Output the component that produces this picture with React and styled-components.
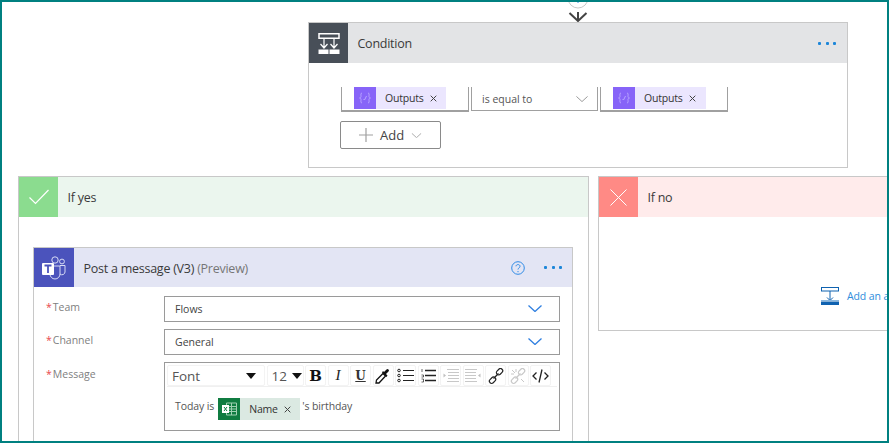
import React from "react";
import styled, { createGlobalStyle } from "styled-components";

const Global = createGlobalStyle`
  html, body { margin: 0; padding: 0; background: #fff; }
  * { box-sizing: border-box; }
`;

const Frame = styled.div`
  width: 889px; height: 443px; border: 2px solid #008080; overflow: hidden; background: #fff;
  font-family: "Open Sans", "Noto Sans", sans-serif; color: #333;
  display: flex; flex-direction: column;
`;
const Connector = styled.div`
  height: 20px; margin-left: 557px; width: 38px; display: flex; justify-content: center; flex: none;
`;
const ConditionCard = styled.section`
  width: 540px; height: 146px; margin-left: 306px; border: 1px solid #c8c8c8; flex: none; background: #fff;
`;
const CardHeader = styled.header`
  height: ${p => p.$h || 40}px; display: flex; align-items: center; background: ${p => p.$bg};
`;
const IconTile = styled.div`
  width: ${p => p.$w || 39}px; height: 100%; flex: none; background: ${p => p.$bg};
  display: flex; align-items: center; justify-content: center;
`;
const HeaderTitle = styled.h2`
  margin: 0 0 0 9.5px; padding-top: 1px; flex: 1; font-size: 12.5px; font-weight: 400; color: #3a3a3a; white-space: nowrap;
  letter-spacing: -0.25px;
`;
const Muted = styled.span`color: #767676;`;
const Dots = styled.div`
  display: flex; gap: 4.5px; margin-right: ${p => p.$mr}px; margin-left: ${p => p.$ml || 0}px;
  i { width: 3px; height: 3px; background: #1c86d9; border-radius: 1px; display: block; }
`;
const ConditionBody = styled.div`
  padding: 24px 0 0 31px;
`;
const Operands = styled.div`display: flex; gap: 2px; height: 25px; margin-left: 1px;`;
const Operand = styled.div`
  width: ${p => p.$w}px; height: 25px; border: solid #a0a0a0; border-width: 0 1px 2px 1px; padding-left: 12px; flex: none;
`;
const OperatorBox = styled.div`
  width: 127px; height: 24px; border: solid #a0a0a0; border-width: 0 1px 1px 1px; padding: 1px 9px 0 10px;
  display: flex; align-items: center; justify-content: space-between; font-size: 10.5px; color: #555; flex: none;
`;
const Token = styled.span`
  display: inline-flex; align-items: center; height: 22px; background: ${p => p.$bg}; font-size: 10.5px; color: #333;
  letter-spacing: -0.2px; width: ${p => p.$w}px; vertical-align: top; margin-left: ${p => p.$ml || 0}px; flex: none;
`;
const TokenIcon = styled.span`
  width: 22px; height: 22px; background: ${p => p.$bg}; flex: none; display: flex; align-items: center; justify-content: center;
`;
const TokenLabel = styled.span`margin-left: ${p => p.$ml}px;`;
const TokenClose = styled.span`margin-left: 6px; display: flex;`;
const AddButton = styled.button`
  width: 101px; height: 28px; margin-top: 9px; border: 1px solid #8a8a8a; border-radius: 2px; background: #fff;
  display: flex; align-items: center; padding: 0 0 0 18px; gap: 7px; font: 400 13px "Open Sans", sans-serif; color: #444;
`;
const Branches = styled.div`
  display: flex; gap: 9px; margin: 8px 0 0 16px; align-items: flex-start; width: 1000px; flex: none;
`;
const YesCard = styled.section`
  width: 571px; height: 300px; border: 1px solid #c8c8c8; flex: none;
`;
const NoCard = styled.section`
  width: 320px; height: 155px; border: 1px solid #c8c8c8; flex: none; display: flex; flex-direction: column;
`;
const YesBody = styled.div`padding: 30px 15px 0 14px;`;
const NoBody = styled.div`
  flex: 1; padding: 70px 0 0 222px;
`;
const AddAction = styled.div`
  display: flex; align-items: center; gap: 8px; font-size: 10.5px; letter-spacing: -0.1px; color: #2f8ddc; white-space: nowrap;
`;
const ActionCard = styled.section`
  width: 540px; height: 300px; border: 1px solid #c8c8c8;
`;
const ActionIconWrap = styled.div`margin-left: auto; display: flex;`;
const ActionBody = styled.div`
  padding: 9px 12px 0 12px; display: flex; flex-direction: column; gap: 7px;
`;
const Row = styled.div`display: grid; grid-template-columns: 118px 396px; align-items: start;`;
const Label = styled.label`
  font-size: 10.5px; color: #808080; display: flex; gap: 1px; padding-top: ${p => p.$pt}px;
  b { color: #e8474c; font-weight: 400; }
`;
const Select = styled.div`
  height: 26px; border: 1px solid #9a9a9a; padding: 0 17px 1px 10px; font-size: 10.5px; color: #444;
  display: flex; align-items: center; justify-content: space-between;
`;
const Editor = styled.div`
  height: 69px; border: 1px solid #9a9a9a; padding: 2px 2px 0 2px;
`;
const Toolbar = styled.div`
  height: 22px; display: flex; gap: 1.5px; border-bottom: 1px solid #f0f0f0; align-items: stretch;
`;
const ToolButton = styled.div`
  width: ${p => p.$w || 21}px; border: 1px solid #f3f3f3; border-radius: 2px; flex: none;
  display: flex; align-items: center; justify-content: ${p => p.$between ? "space-between" : "center"};
  padding: ${p => p.$between ? `0 ${p.$pr}px 0 ${p.$pl}px` : "0"};
  font-size: 13.5px; color: #555;
`;
const Bold = styled.span`font: 700 15px "DejaVu Serif", serif; color: #111;`;
const Ital = styled.span`font: italic 400 15px "Liberation Serif", serif; color: #222;`;
const Under = styled.span`font: 700 12px "DejaVu Serif", serif; color: #333; text-decoration: underline;`;
const Caret = styled.span`
  width: 0; height: 0; border: 5px solid transparent; border-top: 6px solid #111; border-bottom: 0; display: block;
`;
const EditorBody = styled.div`
  display: flex; align-items: flex-start; padding: 11px 0 0 8px; font-size: 10.5px; color: #555; letter-spacing: -0.1px;
`;
const InlineText = styled.span`margin-top: 1px; margin-left: ${p => p.$ml || 0}px;`;

const Chev = ({ w = 14, h = 7, c = "#8a8a8a", sw = 1 }) => (
  <svg width={w} height={h} viewBox="0 0 14 7"><path d="M.5.5 7 6.5 13.5.5" fill="none" stroke={c} strokeWidth={sw} /></svg>
);
const Fx = () => (
  <svg width="14" height="12" viewBox="0 0 14 12" fill="none" stroke="#b9a5ff" strokeWidth="1">
    <path d="M4 1C2.500 1 3 3 3 4.500S1.500 6 1.500 6 3 6 3 7.500 2.500 11 4 11M10 1c1.500 0 1 2 1 3.500S12.500 6 12.500 6 11 6 11 7.500s.5 3.500-1 3.500M5.500 7l1 1 2-4" />
  </svg>
);
const Close = () => (
  <svg width="7" height="7" viewBox="0 0 7 7"><path d="M.7.7l5.600 5.600M6.300.7.7 6.300" stroke="#444" strokeWidth="1" /></svg>
);
const ConditionGlyph = () => (
  <svg width="22" height="21" viewBox="0 0 22 21" fill="none" stroke="#fff">
    <path d="M1 .75h20v4.500H1z" strokeWidth="1.500" />
    <path d="M6 5v10M16 5v10M2.500 11 6 15l3.500-4M12.500 11l3.500 4 3.500-4" strokeWidth="1.200" />
    <path d="M.5 16.500h10v4.500H.5zM11.500 16.500h10v4.500h-10z" fill="#fff" stroke="none" />
  </svg>
);
const Check = () => (
  <svg width="20" height="16" viewBox="0 0 20 16"><path d="M.5 8.500 6.500 14.500 19.500 1" fill="none" stroke="#fff" strokeWidth="1.200" /></svg>
);
const Cross = () => (
  <svg width="17" height="17" viewBox="0 0 17 17"><path d="M.5.5l16 16M16.500.5l-16 16" stroke="#fff" strokeWidth="1" /></svg>
);
const TeamsGlyph = () => (
  <svg width="26" height="26" viewBox="0 0 26 26" fill="none">
    <circle cx="14" cy="5" r="3.200" stroke="#d8dcf5" strokeWidth="1" />
    <circle cx="21" cy="6.500" r="2.400" stroke="#d8dcf5" strokeWidth="1" />
    <path d="M9 11h10v8a5 5 0 0 1-10 0z" stroke="#d8dcf5" strokeWidth="1" />
    <path d="M19 10.500h5v6.500a3 3 0 0 1-5 2" stroke="#d8dcf5" strokeWidth="1" />
    <rect x="1" y="8" width="12" height="12" rx="1" fill="#fff" />
    <path d="M3.500 10.500h7M7 10.500V18" stroke="#4b53bc" strokeWidth="1.800" />
  </svg>
);
const Help = () => (
  <svg width="14" height="14" viewBox="0 0 14 14" fill="none" stroke="#2f8be6">
    <circle cx="7" cy="7" r="6.300" strokeWidth="1" />
    <path d="M5 5.300C5 3 9 3 9 5.300 9 7 7 6.800 7 8.500" strokeWidth="1" />
    <path d="M7 10v1.200" strokeWidth="1" />
  </svg>
);
const ExcelGlyph = () => (
  <svg width="16" height="14" viewBox="0 0 16 14">
    <path d="M5.500 1h10v12h-10z" fill="none" stroke="#9fd0b2" strokeWidth="1" />
    <path d="M5.500 4.500h10M5.500 7h10M5.500 9.500h10M10.500 1v12" stroke="#9fd0b2" strokeWidth="1" />
    <rect x="1" y="3" width="7" height="8" fill="#fff" />
    <path d="M3 5l3 4M6 5 3 9" stroke="#107c41" strokeWidth="1" />
  </svg>
);
const AddActionGlyph = () => (
  <svg width="18" height="18" viewBox="0 0 18 18" fill="none">
    <rect x=".5" y=".5" width="17" height="3.500" stroke="#0f62b0" />
    <path d="M9 4v9M6 10.500l3 3 3-3" stroke="#0f62b0" />
    <rect y="14.500" width="18" height="3.500" fill="#0f62b0" />
    <path d="M0 13.500h18" stroke="#8ab8e0" />
  </svg>
);
const Dropper = () => (
  <svg width="16" height="16" viewBox="0 0 16 16"><path d="M1 15h3l6.500-7L8 5.500 1.500 12z" fill="none" stroke="#111" strokeWidth="1.300" /><path d="M7 4.500l4.500 4.500 1-1.500L11 6l2.500-2.500a1.400 1.400 0 0 0-2-2L9 4 8 3z" fill="#111" /></svg>
);
const ListDots = () => (
  <svg width="17" height="15" viewBox="0 0 17 15" fill="none" stroke="#222"><circle cx="2" cy="2.500" r="1.300" /><circle cx="2" cy="7.500" r="1.300" /><circle cx="2" cy="12.500" r="1.300" /><path d="M6 2.500h11M6 7.500h11M6 12.500h11" strokeWidth="1.200" /></svg>
);
const ListNums = () => (
  <svg width="15" height="15" viewBox="0 0 15 15" fill="none" stroke="#222"><path d="M1 1v3M.5 7h2v2h-2M.5 11h2v3h-2" strokeWidth=".7" /><path d="M4 2.500h11M4 7.500h11M4 12.500h11" strokeWidth="1.300" /></svg>
);
const Indent = ({ flip }) => (
  <svg width="16" height="14" viewBox="0 0 16 14" fill="none" stroke="#c8c8c8" style={flip ? { transform: "scaleX(-1)" } : undefined}><path d="M4 .5h12M5 3.500h11M5 6.500h11M5 9.500h11M4 12.500h12" /><path d="M.5 4.500l2.500 2-2.500 2z" fill="#c0c0c0" stroke="none" /></svg>
);
const LinkIcon = ({ c = "#222", broken }) => (
  <svg width="16" height="16" viewBox="0 0 16 16" fill="none" stroke={c} strokeWidth="1.200">
    <rect x="8" y="1.500" width="7" height="4.500" rx="2.200" transform="rotate(-45 11.500 3.700)" />
    <rect x="1" y="10" width="7" height="4.500" rx="2.200" transform="rotate(-45 4.500 12.200)" />
    <path d="M5.500 10.500l5-5" />
    {broken && <path d="M2 2l3 3M14 14l-3-3M6 1v3M1 6h3" strokeWidth="1" />}
  </svg>
);
const CodeIcon = () => (
  <svg width="17" height="14" viewBox="0 0 17 14" fill="none" stroke="#222" strokeWidth="1.300">
    <path d="M4.500 3.500 1 7l3.500 3.500M12.500 3.500 16 7l-3.500 3.500M10 .5 7 13.500" />
  </svg>
);
const PlusIcon = () => (
  <svg width="14" height="14" viewBox="0 0 14 14"><path d="M7 0v14M0 7h14" stroke="#a0a0a0" strokeWidth="1.200" /></svg>
);

export default function App() {
  return (
    <Frame>
      <Global />
      <Connector>
        <svg width="20" height="20" viewBox="0 0 20 20" fill="none">
          <circle cx="10" cy="-4" r="10" stroke="#c8c8c8" />
          <path d="M10 -2v3" stroke="#2f8be6" strokeWidth="1" />
          <path d="M10 10v9" stroke="#444" strokeWidth="2" />
          <path d="M1.500 11 10 19l8.500-8" stroke="#444" strokeWidth="2" />
        </svg>
      </Connector>
      <ConditionCard>
        <CardHeader $bg="#e3e4e6">
          <IconTile $bg="#484f58"><ConditionGlyph /></IconTile>
          <HeaderTitle>Condition</HeaderTitle>
          <Dots $mr={11}><i /><i /><i /></Dots>
        </CardHeader>
        <ConditionBody>
          <Operands>
            <Operand $w={128}>
              <Token $bg="#ebe6fe" $w={92}><TokenIcon $bg="#8764f8"><Fx /></TokenIcon><TokenLabel $ml={9}>Outputs</TokenLabel><TokenClose><Close /></TokenClose></Token>
            </Operand>
            <OperatorBox>is equal to<Chev w={12} h={6} /></OperatorBox>
            <Operand $w={128}>
              <Token $bg="#ebe6fe" $w={93}><TokenIcon $bg="#8764f8"><Fx /></TokenIcon><TokenLabel $ml={9}>Outputs</TokenLabel><TokenClose><Close /></TokenClose></Token>
            </Operand>
          </Operands>
          <AddButton><PlusIcon />Add<Chev w={11} h={5} /></AddButton>
        </ConditionBody>
      </ConditionCard>
      <Branches>
        <YesCard>
          <CardHeader $bg="#ebf6ee">
            <IconTile $bg="#8bdc8f"><Check /></IconTile>
            <HeaderTitle>If yes</HeaderTitle>
          </CardHeader>
          <YesBody>
            <ActionCard>
              <CardHeader $bg="#e3e5f4" $h={39}>
                <IconTile $bg="#4b53bc" $w={40}><TeamsGlyph /></IconTile>
                <HeaderTitle>Post a message (V3) <Muted>(Preview)</Muted></HeaderTitle>
                <ActionIconWrap><Help /></ActionIconWrap>
                <Dots $mr={10} $ml={19}><i /><i /><i /></Dots>
              </CardHeader>
              <ActionBody>
                <Row>
                  <Label $pt={4}><b>*</b>Team</Label>
                  <Select>Flows<Chev c="#2f7fe0" sw={1.300} /></Select>
                </Row>
                <Row>
                  <Label $pt={4}><b>*</b>Channel</Label>
                  <Select>General<Chev c="#2f7fe0" sw={1.300} /></Select>
                </Row>
                <Row>
                  <Label $pt={5}><b>*</b>Message</Label>
                  <Editor>
                    <Toolbar>
                      <ToolButton $w={98} $between $pl={4} $pr={8}>Font<Caret /></ToolButton>
                      <ToolButton $w={37} $between $pl={4} $pr={1}>12<Caret /></ToolButton>
                      <ToolButton><Bold>B</Bold></ToolButton>
                      <ToolButton><Ital>I</Ital></ToolButton>
                      <ToolButton><Under>U</Under></ToolButton>
                      <ToolButton><Dropper /></ToolButton>
                      <ToolButton><ListDots /></ToolButton>
                      <ToolButton><ListNums /></ToolButton>
                      <ToolButton><Indent /></ToolButton>
                      <ToolButton><Indent flip /></ToolButton>
                      <ToolButton><LinkIcon /></ToolButton>
                      <ToolButton><LinkIcon c="#c8c8c8" broken /></ToolButton>
                      <ToolButton><CodeIcon /></ToolButton>
                    </Toolbar>
                    <EditorBody>
                      <InlineText>Today is</InlineText>
                      <Token $bg="#dbe9e2" $w={82} $ml={4}>
                        <TokenIcon $bg="#107c41"><ExcelGlyph /></TokenIcon><TokenLabel $ml={9}>Name</TokenLabel><TokenClose><Close /></TokenClose>
                      </Token>
                      <InlineText $ml={2}>'s birthday</InlineText>
                    </EditorBody>
                  </Editor>
                </Row>
              </ActionBody>
            </ActionCard>
          </YesBody>
        </YesCard>
        <NoCard>
          <CardHeader $bg="#ffebeb">
            <IconTile $bg="#ff8a85"><Cross /></IconTile>
            <HeaderTitle>If no</HeaderTitle>
          </CardHeader>
          <NoBody>
            <AddAction><AddActionGlyph />Add an action</AddAction>
          </NoBody>
        </NoCard>
      </Branches>
    </Frame>
  );
}
